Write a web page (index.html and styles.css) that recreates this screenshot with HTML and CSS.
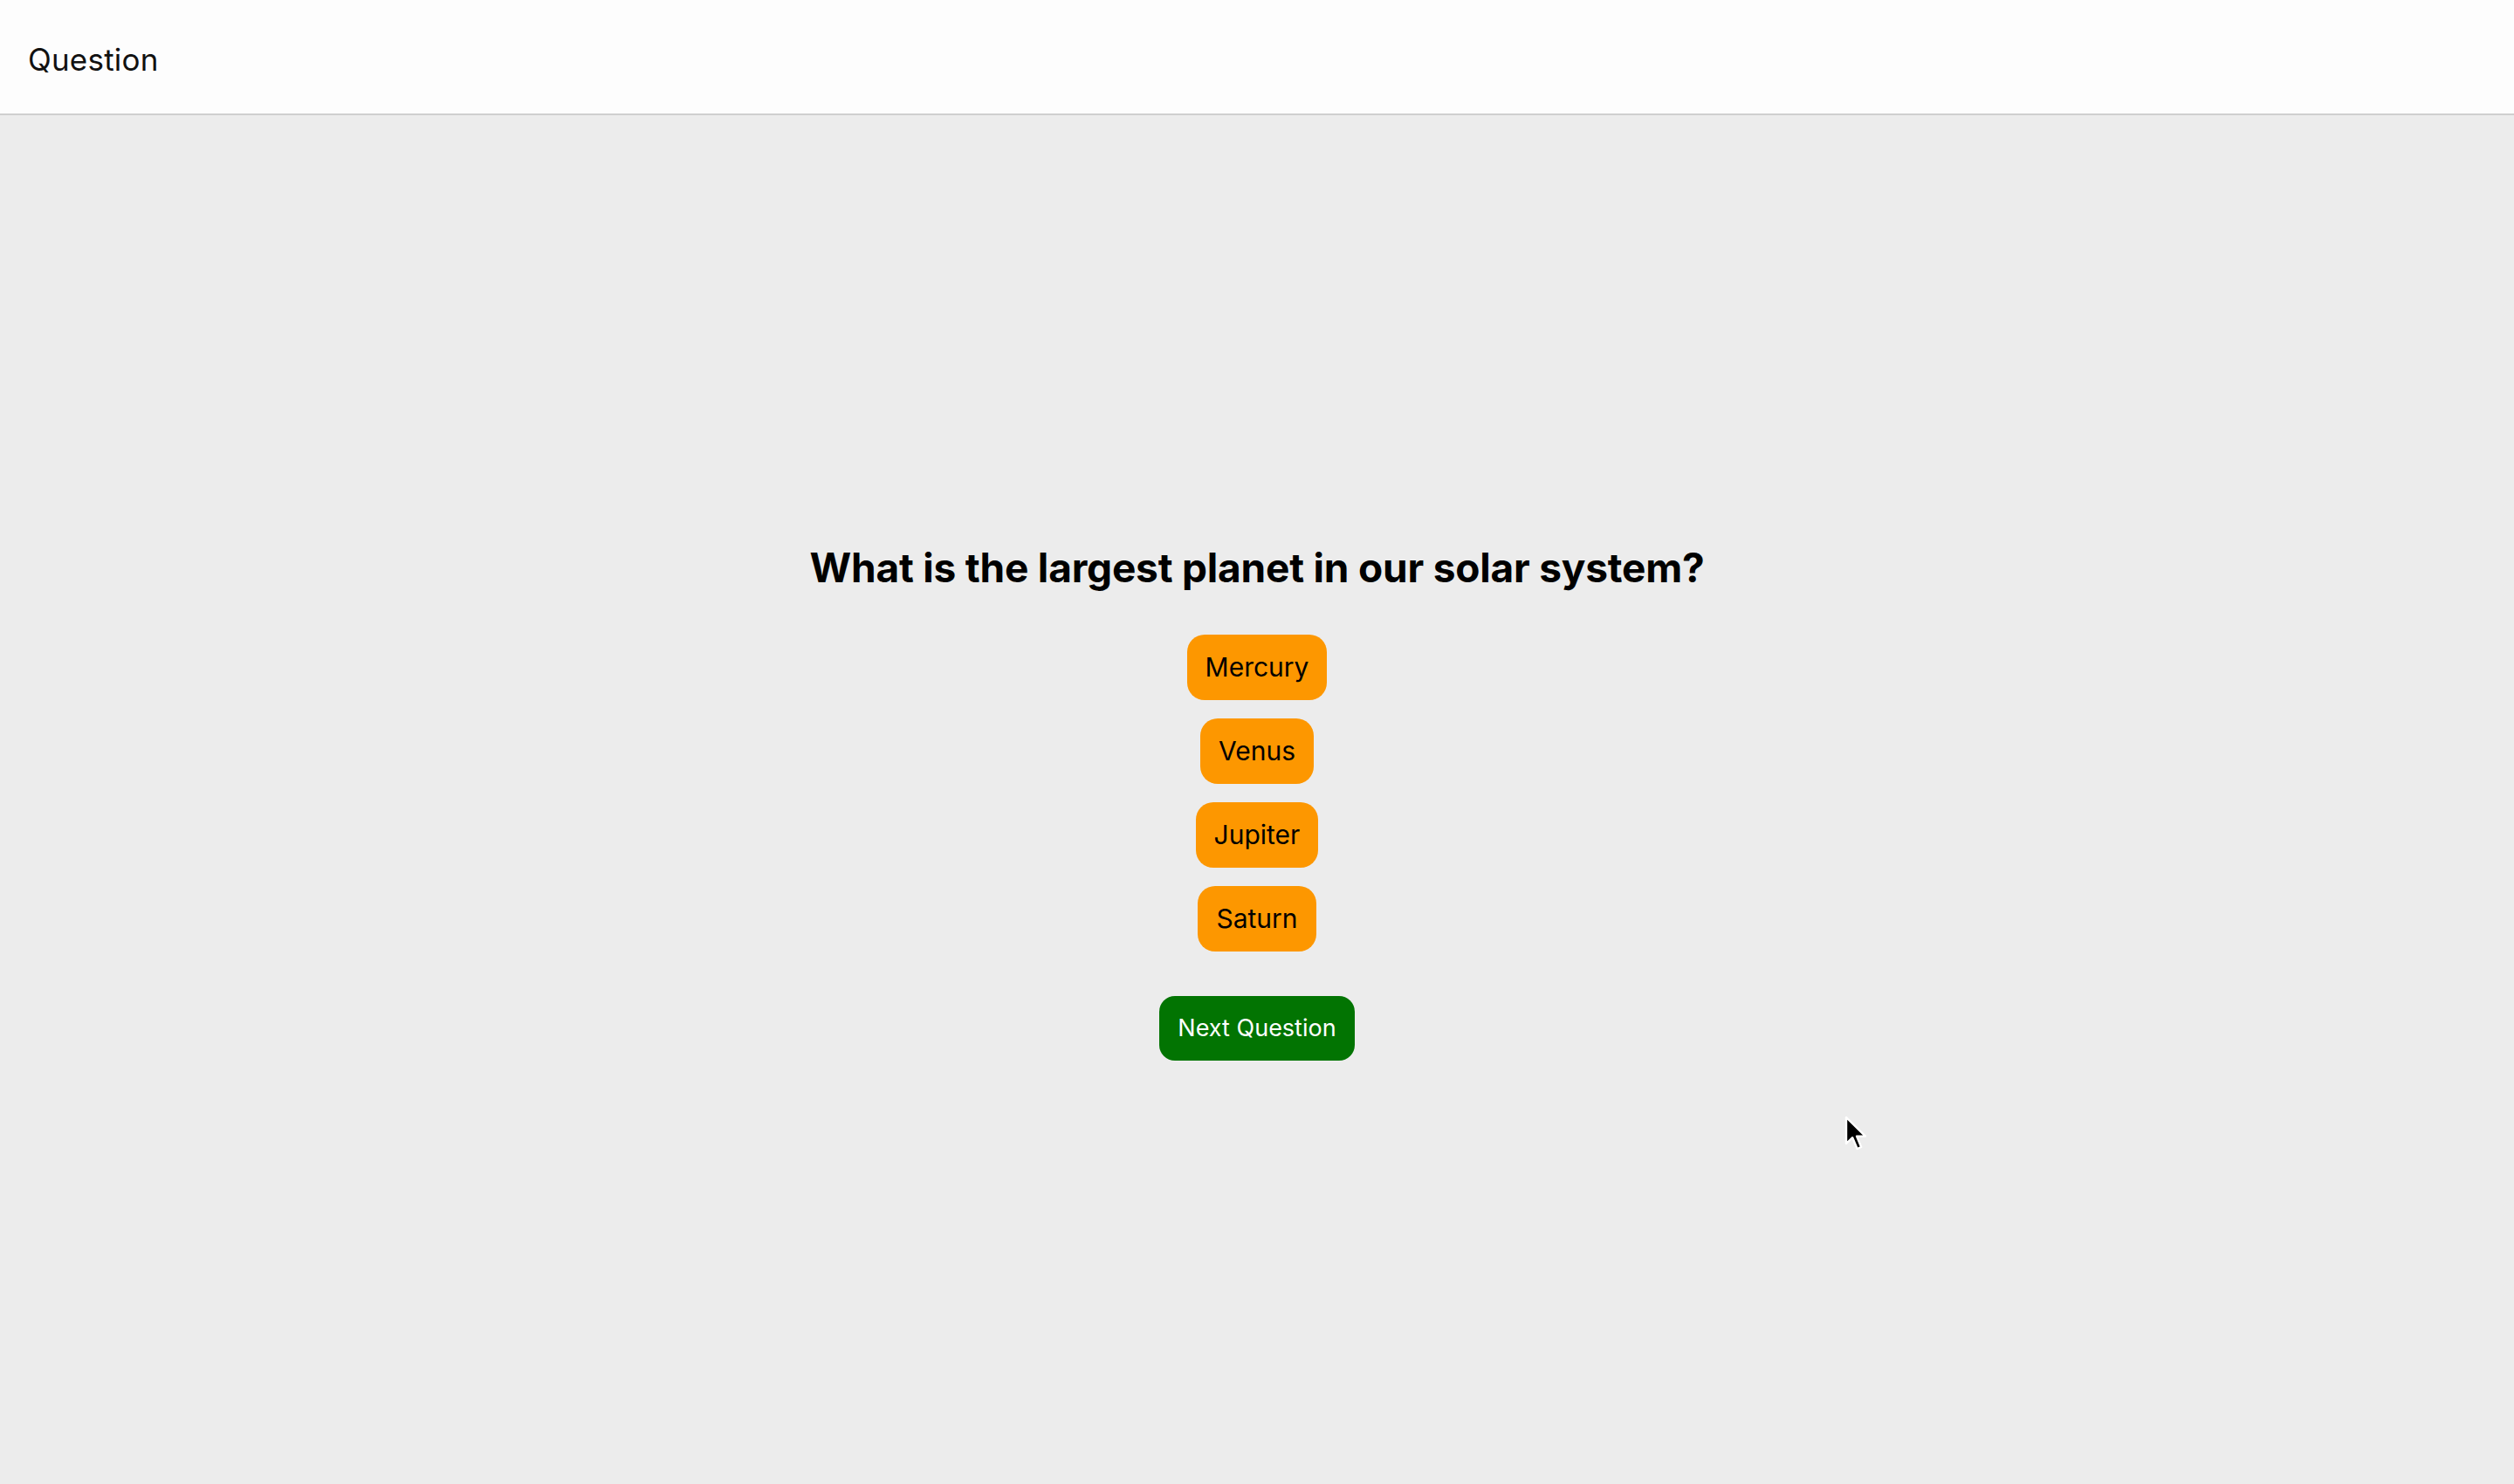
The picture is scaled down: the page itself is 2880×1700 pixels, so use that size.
FILE: index.html
```html
<!DOCTYPE html>
<html lang="en">
<head>
<meta charset="utf-8">
<title>Question</title>
<link rel="stylesheet" href="styles.css">
</head>
<body>
<div class="app">
  <header class="topbar">
    <h1 class="title">Question</h1>
  </header>
  <main class="stage">
    <section class="quiz">
      <h2 class="prompt">What is the largest planet in our solar system?</h2>
      <div class="answers">
        <button class="answer">Mercury</button>
        <button class="answer">Venus</button>
        <button class="answer">Jupiter</button>
        <button class="answer">Saturn</button>
      </div>
      <button class="next">Next Question</button>
    </section>
    <svg class="cursor" width="30" height="44" viewBox="0 0 15 22" aria-hidden="true">
      <path d="M1 1 L1 16 L4.6 12.6 L7.3 19 L9.6 18 L7 11.8 L12 11.8 Z" fill="#000" stroke="#fff" stroke-width="1.2" stroke-linejoin="round"/>
    </svg>
  </main>
</div>
</body>
</html>
```

FILE: styles.css
```css
html, body {
  margin: 0;
  padding: 0;
  height: 100%;
}
body {
  font-family: Inter, "Noto Sans", "Liberation Sans", sans-serif;
  background: #ececec;
  color: #000;
}
.app {
  display: flex;
  flex-direction: column;
  height: 100vh;
}
.topbar {
  height: 130px;
  flex: 0 0 auto;
  background: #fdfdfd;
  border-bottom: 2px solid #cfcfcf;
  display: flex;
  align-items: center;
  padding-left: 32px;
}
.title {
  margin: 0;
  font-size: 35px;
  font-weight: 400;
  color: #111;
  letter-spacing: 0.2px;
  position: relative;
  top: 3px;
}
.stage {
  flex: 1;
  position: relative;
  display: flex;
  align-items: center;
  justify-content: center;
}
.quiz {
  display: flex;
  flex-direction: column;
  align-items: center;
  position: relative;
  top: 2px;
}
.prompt {
  margin: 0 0 49px;
  font-size: 46px;
  font-weight: 700;
  letter-spacing: -0.2px;
  line-height: 56px;
}
.answers {
  display: flex;
  flex-direction: column;
  align-items: center;
  gap: 21px;
}
.answer {
  font-family: inherit;
  font-size: 30px;
  height: 75px;
  padding: 0 21px;
  border: none;
  border-radius: 20px;
  background: #fd9700;
  color: #000;
}
.next {
  margin-top: 51px;
  font-family: inherit;
  font-size: 27px;
  height: 74px;
  padding: 0 21px;
  border: none;
  border-radius: 18px;
  background: #027402;
  color: #fff;
}
.cursor {
  position: absolute;
  left: 2113px;
  top: 1146px;
}
```
